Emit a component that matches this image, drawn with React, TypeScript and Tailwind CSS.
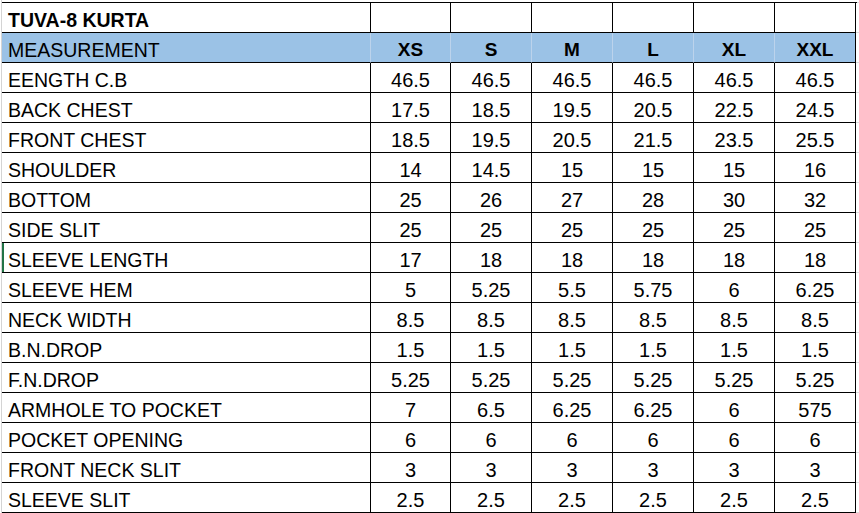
import * as React from "react"

const sizes = ["XS", "S", "M", "L", "XL", "XXL"]

const rows: [string, string[]][] = [
  ["EENGTH C.B", ["46.5", "46.5", "46.5", "46.5", "46.5", "46.5"]],
  ["BACK CHEST", ["17.5", "18.5", "19.5", "20.5", "22.5", "24.5"]],
  ["FRONT CHEST", ["18.5", "19.5", "20.5", "21.5", "23.5", "25.5"]],
  ["SHOULDER", ["14", "14.5", "15", "15", "15", "16"]],
  ["BOTTOM", ["25", "26", "27", "28", "30", "32"]],
  ["SIDE SLIT", ["25", "25", "25", "25", "25", "25"]],
  ["SLEEVE LENGTH", ["17", "18", "18", "18", "18", "18"]],
  ["SLEEVE HEM", ["5", "5.25", "5.5", "5.75", "6", "6.25"]],
  ["NECK WIDTH", ["8.5", "8.5", "8.5", "8.5", "8.5", "8.5"]],
  ["B.N.DROP", ["1.5", "1.5", "1.5", "1.5", "1.5", "1.5"]],
  ["F.N.DROP", ["5.25", "5.25", "5.25", "5.25", "5.25", "5.25"]],
  ["ARMHOLE TO POCKET", ["7", "6.5", "6.25", "6.25", "6", "575"]],
  ["POCKET OPENING", ["6", "6", "6", "6", "6", "6"]],
  ["FRONT NECK SLIT", ["3", "3", "3", "3", "3", "3"]],
  ["SLEEVE SLIT", ["2.5", "2.5", "2.5", "2.5", "2.5", "2.5"]],
]

// first size column is one pixel narrower than the rest
const colW = ["w-[80px]", "w-[81px]", "w-[81px]", "w-[81px]", "w-[81px]", "w-[81px]"]

function Row({
  label,
  cells,
  header,
  title,
  marked,
}: {
  label: string
  cells: string[]
  header?: boolean
  title?: boolean
  marked?: boolean
}) {
  return (
    <div className="flex h-[30px]">
      <div
        className={
          "flex h-[30px] w-[369px] shrink-0 border-b border-r border-black pl-[6px] pt-[5px] leading-[24px] text-[19.5px] " +
          (header ? "border-r-[#bcd3ec] bg-[#9bc2e6] " : "") +
          (title ? "font-bold " : "") +
          (marked ? "shadow-[inset_2px_0_0_#217346]" : "")
        }
      >
        {label}
      </div>
      {cells.map((c, i) => (
        <div
          key={i}
          className={
            "h-[30px] shrink-0 border-b border-r border-black pt-[5px] text-center leading-[24px] " +
            colW[i] +
            (header
              ? " border-r-[#bcd3ec] bg-[#9bc2e6] text-[19px] font-bold"
              : " text-[20px]") +
            (header && i === cells.length - 1 ? " border-r-black" : "")
          }
        >
          {c}
        </div>
      ))}
      <div className="h-[30px] flex-1 border-b border-[#dcdcdc]" />
    </div>
  )
}

export default function App() {
  return (
    <div
      className="h-[513px] w-[859px] overflow-hidden bg-white text-black"
      style={{ fontFamily: '"Liberation Sans", Arial, sans-serif' }}
    >
      <div className="ml-px h-[2px] border-l border-[#d4d4d4]" />
      <div className="ml-px border-l border-[#d4d4d4]">
        <div className="flex">
          <div className="w-[855px] border-t border-black" />
          <div className="flex-1 border-t border-[#dcdcdc]" />
        </div>
        <Row label="TUVA-8 KURTA" cells={["", "", "", "", "", ""]} title />
        <Row label="MEASUREMENT" cells={sizes} header />
        {rows.map(([label, vals]) => (
          <Row key={label} label={label} cells={vals} marked={label === "SLEEVE LENGTH"} />
        ))}
      </div>
    </div>
  )
}
